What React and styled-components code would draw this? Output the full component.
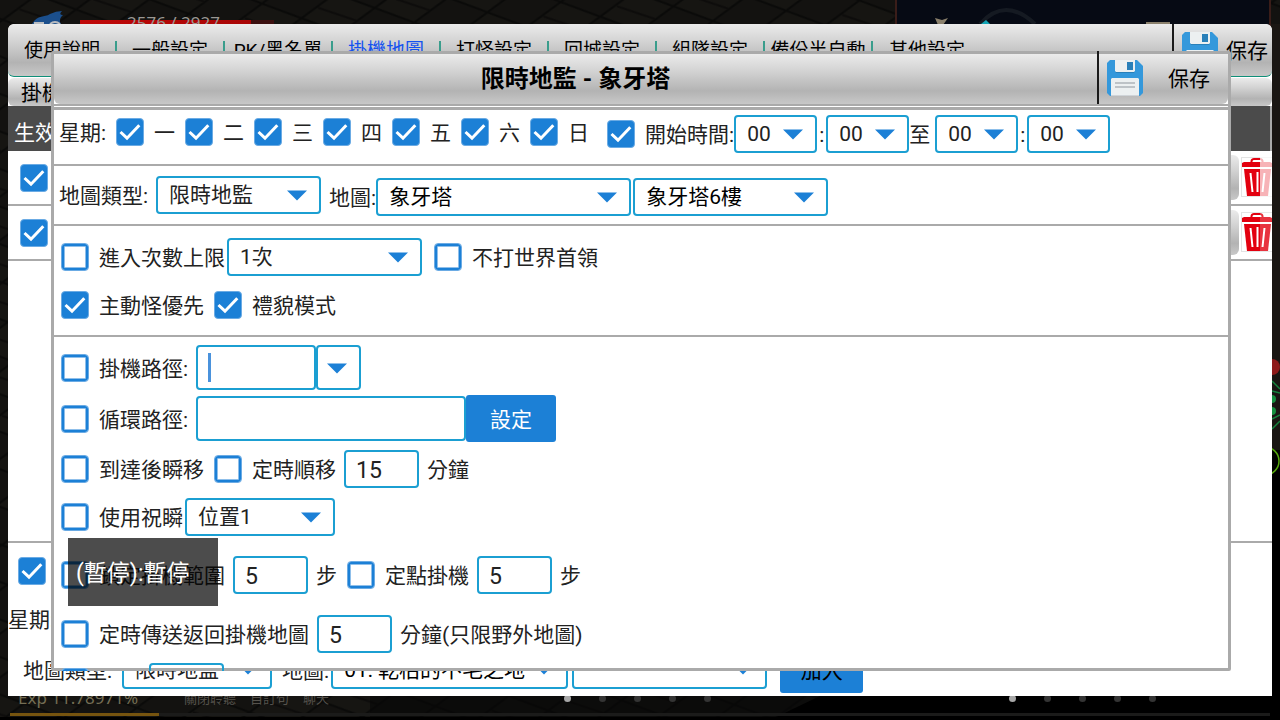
import React from "react";
import styled, { createGlobalStyle } from "styled-components";

const BLUE = "#1c80d6";
const FIELD = "#1b9fd2";
const GREY = "#aaaaaa";
const BAR =
  "linear-gradient(to bottom, #ebebeb 0%, #d2d2d2 35%, #b3b3b3 74%, #c8c8c8 100%)";

const GlobalStyle = createGlobalStyle`
  *, *::before, *::after { box-sizing: border-box; }
  body {
    margin: 0;
    background: #0b0a09;
    color: #222222;
    font-family: Roboto, "Noto Sans CJK TC", sans-serif;
    font-size: 21px;
    line-height: 24px;
  }
  button, input, select { font: inherit; color: inherit; margin: 0; }
`;

const Screen = styled.main`
  position: relative;
  min-height: 100vh;
  padding: 24px 8px;
  overflow: hidden;
`;

/* ---------- game scene ---------- */

const Scene = styled.svg`
  position: absolute;
  inset: 0;
  width: 100%;
  height: 100%;
`;

const HealthText = styled.span`
  position: absolute;
  left: 127px;
  top: 11px;
  font-family: "Noto Sans", sans-serif;
  font-size: 17px;
  color: #9a9793;
`;

const StatusLine = styled.div`
  position: absolute;
  left: 18px;
  bottom: 10px;
  display: flex;
  gap: 14px;
  font-family: "Noto Sans", "Noto Sans CJK TC", sans-serif;
  font-size: 13px;
  color: #55524c;
`;

const ExpText = styled.span`
  width: 152px;
  font-size: 17px;
  color: #746e54;
`;

const Pager = styled.div`
  position: absolute;
  right: ${(p) => p.$right}px;
  bottom: 18px;
  display: flex;
  gap: 28px;
`;

const PagerDot = styled.span`
  width: 7px;
  height: 7px;
  border-radius: 50%;
  background: ${(p) => (p.$on ? "#a8a8a8" : "#343434")};
`;

/* ---------- shared controls ---------- */

const TickWrap = styled.span`
  display: inline-grid;
  flex: none;
  width: 28px;
  height: 28px;
  & > * { grid-area: 1 / 1; }
`;

const TickInput = styled.input`
  appearance: none;
  width: 28px;
  height: 28px;
  border: 1px solid #6babe4;
  border-radius: 4px;
  background: #ffffff;
  box-shadow: inset 0 0 0 2px ${BLUE}, inset 0 0 0 3px #8fbfea;
  &:checked { background: ${BLUE}; box-shadow: none; }
  & + svg { display: none; pointer-events: none; }
  &:checked + svg { display: block; }
`;

function Tick(props) {
  return (
    <TickWrap>
      <TickInput type="checkbox" {...props} />
      <svg width="28" height="28" viewBox="0 0 28 28" fill="none">
        <path d="M4.5 14 L11 20.2 L23.3 7.2" stroke="#fff" strokeWidth="3" />
      </svg>
    </TickWrap>
  );
}

const CheckLabel = styled.label`
  display: flex;
  align-items: center;
  gap: 10px;
  white-space: nowrap;
  margin-right: ${(p) => p.$after ?? 0}px;
`;

const CheckText = styled.span`
  padding-top: 2px;
`;

function Check({ text, after, checked }) {
  return (
    <CheckLabel $after={after}>
      <Tick defaultChecked={checked} />
      <CheckText>{text}</CheckText>
    </CheckLabel>
  );
}

const SelectWrap = styled.span`
  display: inline-grid;
  flex: none;
  align-items: center;
  width: ${(p) => p.$width}px;
  & > * { grid-area: 1 / 1; }
  & > svg { justify-self: end; margin-right: 14px; pointer-events: none; }
`;

const SelectField = styled.select`
  appearance: none;
  width: 100%;
  height: 38px;
  padding: 0 36px 0 11px;
  border: 2px solid ${FIELD};
  border-radius: 4px;
  background: #ffffff;
  color: ${(p) => (p.$strong ? "#000000" : "#222222")};
`;

function Arrow() {
  return (
    <svg width="20" height="11" viewBox="0 0 20 11">
      <path d="M0 0.5 H20 L10 10.5 Z" fill={BLUE} />
    </svg>
  );
}

function Select({ label, width, value, strong }) {
  return (
    <SelectWrap $width={width}>
      <SelectField aria-label={label} $strong={strong} defaultValue={value}>
        <option value={value}>{value}</option>
      </SelectField>
      <Arrow />
    </SelectWrap>
  );
}

const TextField = styled.input`
  flex: none;
  width: ${(p) => p.$width}px;
  height: ${(p) => (p.$tall ? 45 : 38)}px;
  padding: 2px 10px 0;
  border: 2px solid ${FIELD};
  border-radius: 4px;
  background: transparent;
  font-size: 23px;
  outline: none;
`;

const CaretField = styled.span`
  display: inline-grid;
  align-items: center;
  & > * { grid-area: 1 / 1; }
  &::after {
    content: "";
    grid-area: 1 / 1;
    width: 3px;
    height: 29px;
    margin-left: 12px;
    background: #4a92dc;
  }
`;

const DropButton = styled.button`
  display: flex;
  align-items: center;
  width: 45px;
  height: 45px;
  padding: 2px 0 0 9px;
  border: 2px solid ${FIELD};
  border-radius: 4px;
  background: #ffffff;
`;

const ActionButton = styled.button`
  flex: none;
  width: ${(p) => p.$width}px;
  height: 47px;
  padding: 2px 0 0;
  border: 0;
  border-radius: 3px;
  background: ${BLUE};
  color: ${(p) => (p.$dark ? "#000000" : "#ffffff")};
`;

const SaveButton = styled.button`
  display: flex;
  align-items: center;
  gap: ${(p) => p.$gap}px;
  margin-top: ${(p) => (p.$raised ? -3 : 0)}px;
  padding: 0 ${(p) => p.$end}px 0 8px;
  border: 0;
  border-left: 2px solid #1a1a1a;
  background: transparent;
  color: #000000;
  white-space: nowrap;
`;

function Floppy() {
  return (
    <svg width="36" height="36" viewBox="0 0 36 36">
      <path d="M3 0 H30 L36 6 V33 L33 36 H3 L0 33 V3 Z" fill="#3498db" />
      <path d="M8 11 H28 L27 13 H9 Z" fill="#2980b9" />
      <path d="M8 0 H28 V11 L27 12 H9 L8 11 Z" fill="#ecf0f1" />
      <rect x="20" y="4" width="6" height="8" fill="#2980b9" transform="translate(0 -2)" />
      <path d="M4 36 V19 L5 18 H31 L32 19 V36 Z" fill="#ecf0f1" />
      <path d="M8 23 H28 M8 27 H28" stroke="#bdc3c7" strokeWidth="2" />
      <path d="M4 35 H32 V36 H4 Z" fill="#cfd4d8" />
    </svg>
  );
}

/* ---------- main window ---------- */

const Window = styled.section`
  position: relative;
  display: flex;
  flex-direction: column;
  min-height: calc(100vh - 48px);
  background: #ffffff;
  border-radius: 6px 6px 0 0;
  overflow: hidden;
`;

const TopBar = styled.header`
  display: flex;
  height: 53px;
  padding-left: 1px;
  background: ${BAR};
  border-bottom: 1px solid #0f8f78;
  border-radius: 6px;
`;

const Tabs = styled.nav`
  display: flex;
  flex: 1;
  align-items: center;
  padding-top: 2px;
`;

const Tab = styled.a`
  width: 108px;
  height: 20px;
  line-height: 20px;
  border-right: ${(p) => (p.$last ? "0" : "2px solid #3a9d8c")};
  font-size: 19px;
  text-align: center;
  text-decoration: none;
  white-space: nowrap;
  color: ${(p) => (p.$active ? "#1452f0" : "#000000")};
`;

const SubBar = styled.h2`
  margin: 1px 0 0;
  height: 28px;
  padding-left: 13px;
  border-radius: 6px;
  background: ${BAR};
  color: #000000;
  font-size: 21px;
  font-weight: 400;
  line-height: 30px;
`;

const MapTable = styled.table`
  width: 100%;
  border-spacing: 0;
`;

const HeadCell = styled.th`
  height: 45px;
  padding: 8px 0 0 6px;
  border-right: ${(p) => (p.$end ? `2px solid ${GREY}` : "0")};
  background: #4b4b4b;
  color: #ffffff;
  font-weight: 400;
  text-align: left;
`;

const Cell = styled.td`
  height: 55px;
  padding: 0 0 0 12px;
  border-bottom: 2px solid ${GREY};
`;

const RowTools = styled.div`
  display: flex;
  justify-content: flex-end;
  align-items: center;
  gap: 2px;
`;

const EditButton = styled.button`
  width: 60px;
  height: 45px;
  border: 0;
  border-radius: 6px;
  background: ${BAR};
`;

const TrashButton = styled.button`
  display: flex;
  padding: 0;
  border: 0;
  background: transparent;
`;

function Trash({ veil }) {
  return (
    <svg width="31" height="41" viewBox="0 0 31 41">
      <rect x="0.5" y="0.5" width="36" height="39" fill="#fff" stroke="#e3e3e3" />
      <path d="M10.500 5 V4 Q11 2 13 2 H19 Q21 2 21.500 4 V5" fill="none" stroke="#e3000f" strokeWidth="2" />
      <path d="M1 6 L3 5 H29 L31 6 V10 H1 Z" fill="#e3000f" />
      <path d="M3 12 H30 L27 39 H6 Z" fill="#e3000f" />
      <path d="M9.500 16 L11.500 35 M16.500 15 V35 M23.500 16 L21.500 35" stroke="#fff" strokeWidth="2" />
      <rect x="19" y="0" width="12" height="41" fill="#fff" opacity={veil} />
    </svg>
  );
}

const AddForm = styled.form`
  display: flex;
  flex-direction: column;
  margin-top: auto;
  padding: 14px 10px 3px;
  border-top: 2px solid ${GREY};
`;

const FormText = styled.span`
  margin: 23px 0 14px -10px;
`;

const FormRow = styled.div`
  display: flex;
  align-items: center;
  padding-left: 5px;
  white-space: nowrap;
`;

/* ---------- dialog ---------- */

const Dialog = styled.section`
  position: absolute;
  inset: 51px 49px 49px 51px;
  display: flex;
  flex-direction: column;
  border: 3px solid ${GREY};
  border-radius: 2px;
  background: #ffffff;
`;

const DialogBar = styled.header`
  display: flex;
  flex: none;
  height: 50px;
  border-radius: 0 0 6px 6px;
  background: ${BAR};
`;

const DialogRule = styled.div`
  flex: none;
  height: 6px;
  border-top: 2px solid ${GREY};
  border-bottom: 3px solid ${GREY};
`;

const DialogTitle = styled.h1`
  flex: 1;
  margin: 0;
  color: #000000;
  font-size: 24px;
  line-height: 50px;
  font-weight: 700;
  text-align: center;
`;

const DialogBody = styled.div`
  flex: 1;
  min-height: 0;
  margin-bottom: -3px;
  overflow: hidden;
`;

const Group = styled.div`
  padding: ${(p) => p.$pad};
  border-bottom: ${(p) => (p.$open ? "0" : `2px solid ${GREY}`)};
`;

const Line = styled.div`
  display: flex;
  align-items: center;
  margin-top: ${(p) => p.$top ?? 0}px;
  padding-left: ${(p) => p.$indent ?? 7}px;
  white-space: nowrap;
`;

const Days = styled.div`
  display: flex;
  align-items: center;
  gap: 10px;
  padding-bottom: 4px;
  margin-right: 18px;
`;

const Text = styled.span`
  width: ${(p) => (p.$width ? `${p.$width}px` : "auto")};
  padding-top: 2px;
  text-align: center;
  margin: 0 ${(p) => p.$after ?? 0}px 0 ${(p) => p.$before ?? 0}px;
`;

const Lowered = styled.div`
  display: flex;
  align-items: center;
  gap: 2px;
  padding-top: 4px;
`;

const Toast = styled.div`
  position: absolute;
  left: 68px;
  bottom: 114px;
  width: 150px;
  height: 68px;
  padding: 2px 0 0 8px;
  background: rgba(0, 0, 0, 0.7);
  color: #ffffff;
  font-size: 23px;
  line-height: 68px;
`;

const TABS = ["使用說明", "一般設定", "PK/黑名單", "掛機地圖", "打怪設定", "回城設定", "組隊設定", "備份半自動", "其他設定"];
const DAYS = ["一", "二", "三", "四", "五", "六", "日"];

function GameScene() {
  return (
    <>
      <Scene aria-hidden="true">
        <defs>
          <pattern id="stone" width="74" height="40" patternUnits="userSpaceOnUse" patternTransform="rotate(-8)">
            <rect width="74" height="40" fill="#131210" />
            <path d="M0 20 L37 0 L74 20 L37 40 Z" fill="#161512" stroke="#0a0a09" strokeWidth="2" />
            <path d="M18 12 L54 30" stroke="#0d0c0b" strokeWidth="2" />
          </pattern>
          <linearGradient id="hp" x1="0" x2="1" y1="0" y2="0">
            <stop offset="0" stopColor="#c00808" />
            <stop offset="1" stopColor="#a80505" />
          </linearGradient>
        </defs>
        <rect width="100%" height="100%" fill="url(#stone)" />
        <svg x="100%" overflow="visible">
          <rect x="-10" y="24" width="10" height="446" fill="#1a1613" />
          <rect x="-10" y="450" width="10" height="270" fill="#000" />
          <rect x="-384" y="-2" width="374" height="40" fill="#060a14" stroke="#3a1d19" strokeWidth="2" />
          <path d="M-300 24 Q-275 -4 -245 24" fill="none" stroke="#151a22" strokeWidth="4" />
          <path d="M-345 18 L-338 20 L-332 18 L-337 25 H-342 Z" fill="#8a806c" />
          <path d="M-299 24 L-294 20 L-290 24 Z" fill="#12a5b5" />
          <rect x="-134" y="22" width="24" height="4" fill="#8a806c" />
          <circle cx="-8" cy="367" r="8" fill="#8e1a1a" />
          <g fill="none" stroke="#15803c" strokeWidth="1.500">
            <path d="M-8 381 L0 389 M-8 391 L0 393 M-8 419 L0 415 M-8 429 L0 421" />
          </g>
          <circle cx="-8" cy="399" r="4" fill="#15903f" />
          <circle cx="-8" cy="411" r="4" fill="#15903f" />
          <circle cx="-15" cy="461" r="14" fill="none" stroke="#55a80c" strokeWidth="1.500" />
        </svg>
        <path d="M32 24 C38 14 44 18 50 14 Q56 11 62 11 Q58 15 63 15 Q58 19 61 24 Z" fill="#1b4f8c" />
        <path d="M34 23 H44 M50 24 Q55 20 60 24" stroke="#b9bcc0" strokeWidth="2" fill="none" />
        <rect x="80" y="20" width="171" height="6" fill="url(#hp)" />
        <rect x="251" y="20" width="23" height="6" fill="#3c1010" />
        <svg y="100%" overflow="visible">
          <rect x="370" y="-24" width="100%" height="24" fill="#060606" opacity="0.6" />
          <path d="M820 -24 H1280 V0 H770 Z" fill="#000" />
          <rect x="10" y="-7" width="1260" height="3" fill="#1b1b1a" />
          <rect x="10" y="-7" width="149" height="3" fill="#76540f" />
          <rect y="-3" width="100%" height="3" fill="#000" />
        </svg>
      </Scene>
      <HealthText>2576 / 2927</HealthText>
      <StatusLine>
        <ExpText>Exp 11.78971%</ExpText>
        <span>關閉聆聽</span>
        <span>自訂句</span>
        <span>聊天</span>
      </StatusLine>
      {[569, 124].map((right) => (
        <Pager key={right} $right={right}>
          {[0, 1, 2, 3, 4].map((n) => (
            <PagerDot key={n} $on={n === 0} />
          ))}
        </Pager>
      ))}
    </>
  );
}

const FlexRow = styled.div`
  display: flex;
`;

function TickRow() {
  return (
    <FlexRow>
      <Tick defaultChecked aria-label="生效" />
    </FlexRow>
  );
}

function MainWindow() {
  return (
    <Window>
      <TopBar>
        <Tabs>
          {TABS.map((name, i) => (
            <Tab key={name} href="#" $active={i === 3} $last={i === TABS.length - 1}>
              {name}
            </Tab>
          ))}
        </Tabs>
        <SaveButton type="button" $gap={8} $end={4}>
          <Floppy />
          <CheckText>保存</CheckText>
        </SaveButton>
      </TopBar>
      <SubBar>掛機地圖</SubBar>
      <MapTable>
        <thead>
          <tr>
            <HeadCell scope="col">生效</HeadCell>
            <HeadCell scope="col" $end />
          </tr>
        </thead>
        <tbody>
          {[0.7, 0.2].map((veil) => (
            <tr key={veil}>
              <Cell>
                <TickRow />
              </Cell>
              <Cell>
                <RowTools>
                  <EditButton type="button" aria-label="編輯" />
                  <TrashButton type="button" aria-label="刪除">
                    <Trash veil={veil} />
                  </TrashButton>
                </RowTools>
              </Cell>
            </tr>
          ))}
        </tbody>
      </MapTable>
      <AddForm>
        <TickRow />
        <FormText>星期:</FormText>
        <FormRow>
          <Text $after={10}>地圖類型:</Text>
          <Select label="地圖類型" width={150} value="限時地監" />
          <Text $before={10} $after={2}>地圖:</Text>
          <Select label="地圖" width={237} value="01: 乾枯的不毛之地" strong />
          <Text $after={4} />
          <Select label="樓層" width={195} value="" />
          <Text $after={13} />
          <ActionButton type="button" $width={83} $dark>加入</ActionButton>
        </FormRow>
      </AddForm>
    </Window>
  );
}

function MapDialog() {
  return (
    <Dialog role="dialog" aria-labelledby="dialog-title">
      <DialogBar>
        <DialogTitle id="dialog-title">限時地監 - 象牙塔</DialogTitle>
        <SaveButton type="button" $gap={25} $end={18} $raised>
          <Floppy />
          <CheckText>保存</CheckText>
        </SaveButton>
      </DialogBar>
      <DialogRule />
      <DialogBody>
        <Group $pad="5px 0 11px">
          <Line $indent={5}>
            <Days>
              <CheckText>星期:</CheckText>
              {DAYS.map((day) => (
                <Check key={day} text={day} checked />
              ))}
            </Days>
            <Check text="開始時間:" checked />
            <Select label="開始時" width={83} value="00" />
            <Text $width={9}>:</Text>
            <Select label="開始分" width={83} value="00" />
            <Text $width={21} $after={5}>至</Text>
            <Select label="結束時" width={83} value="00" />
            <Text $width={9}>:</Text>
            <Select label="結束分" width={83} value="00" />
          </Line>
        </Group>
        <Group $pad="8px 0">
          <Line $indent={5}>
            <Text $after={8}>地圖類型:</Text>
            <Select label="地圖類型" width={165} value="限時地監" />
            <Lowered>
              <Text $before={8} $after={-2}>地圖:</Text>
              <Select label="地圖" width={255} value="象牙塔" strong />
              <Select label="樓層" width={195} value="象牙塔6樓" strong />
            </Lowered>
          </Line>
        </Group>
        <Group $pad="12px 0 16px">
          <Line>
            <Check text="進入次數上限" after={2} />
            <Select label="進入次數" width={195} value="1次" />
            <Text $after={12} />
            <Check text="不打世界首領" />
          </Line>
          <Line $top={15}>
            <Check text="主動怪優先" checked after={10} />
            <Check text="禮貌模式" checked />
          </Line>
        </Group>
        <Group $pad="8px 0" $open>
          <Line>
            <Check text="掛機路徑:" after={8} />
            <CaretField>
              <TextField aria-label="掛機路徑" $width={120} $tall />
            </CaretField>
            <DropButton type="button" aria-label="選擇路徑">
              <Arrow />
            </DropButton>
          </Line>
          <Line $top={5}>
            <Check text="循環路徑:" after={8} />
            <TextField aria-label="循環路徑" $width={270} $tall />
            <ActionButton type="button" $width={90}>設定</ActionButton>
          </Line>
          <Line $top={8}>
            <Check text="到達後瞬移" after={10} />
            <Check text="定時順移" after={8} />
            <TextField aria-label="順移分鐘" $width={75} defaultValue="15" />
            <Text $before={8}>分鐘</Text>
          </Line>
          <Line $top={10}>
            <Check text="使用祝瞬" after={2} />
            <Select label="位置" width={150} value="位置1" />
          </Line>
          <Line $top={20}>
            <Check text="鎖定掛機範圍" after={8} />
            <TextField aria-label="範圍步數" $width={75} defaultValue="5" />
            <Text $before={8} $after={10}>步</Text>
            <Check text="定點掛機" after={8} />
            <TextField aria-label="定點步數" $width={75} defaultValue="5" />
            <Text $before={8}>步</Text>
          </Line>
          <Line $top={21}>
            <Check text="定時傳送返回掛機地圖" after={8} />
            <TextField aria-label="返回分鐘" $width={75} defaultValue="5" />
            <Text $before={8}>分鐘(只限野外地圖)</Text>
          </Line>
          <Line $top={10}>
            <Check after={50} />
            <TextField aria-label="數值" $width={75} />
          </Line>
        </Group>
      </DialogBody>
    </Dialog>
  );
}

export default function App() {
  return (
    <Screen>
      <GlobalStyle />
      <GameScene />
      <MainWindow />
      <MapDialog />
      <Toast role="status">(暫停):暫停</Toast>
    </Screen>
  );
}
